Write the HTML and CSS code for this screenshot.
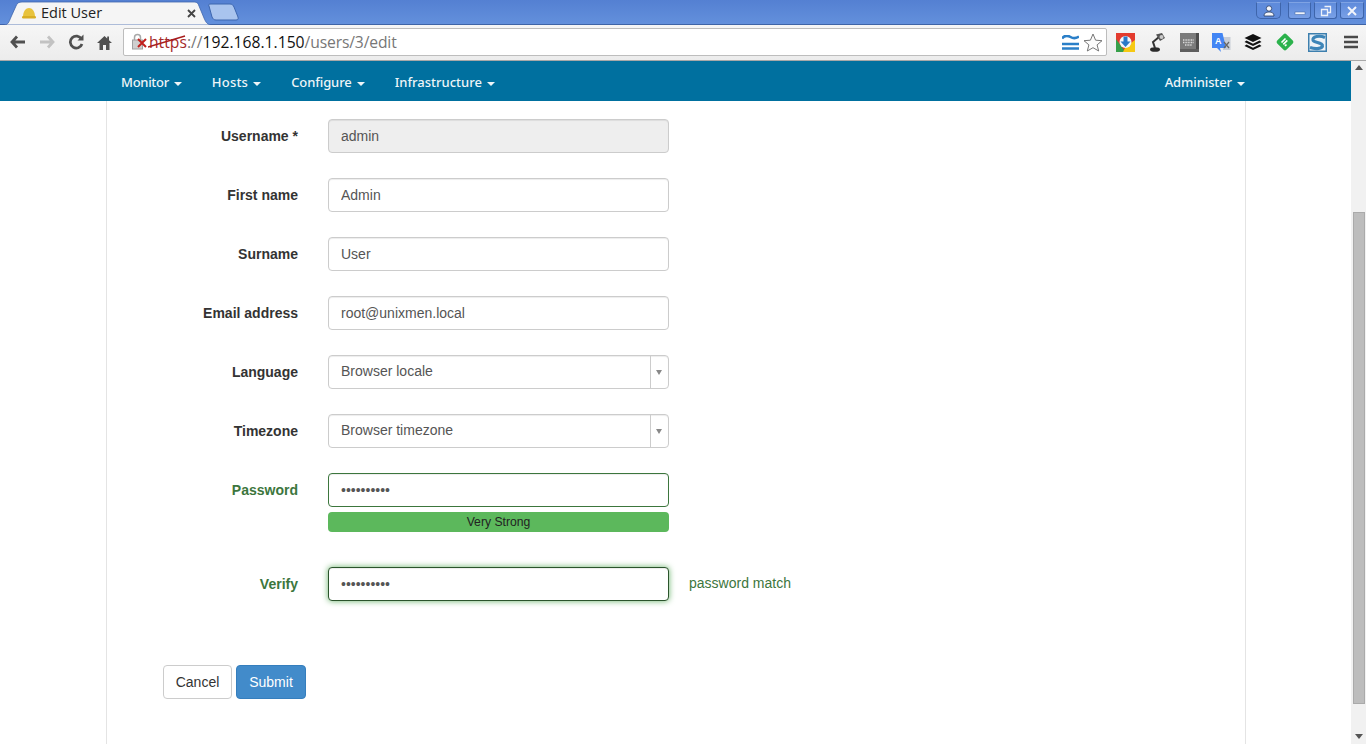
FILE: index.html
```html
<!DOCTYPE html>
<html lang="en">
<head>
<meta charset="utf-8">
<title>Edit User</title>
<link rel="stylesheet" href="styles.css">
</head>
<body>
<div class="chrome">
  <header class="tabstrip">
    <svg class="tabshape" width="240" height="25" viewBox="0 0 240 25"><path d="M0 25H4C8 25 9 22 11 17L16 6C17 3 19 2 22 2H193C197 2 198 3 199 6L204 18C206 23 208 25 212 25H0Z" fill="#f5f5f5" stroke="#3f66ad" stroke-width=".8"/><path d="M209 6C208 4.500 209 4 211 4H230C232 4 233 5 234 7L238 17C238.500 19 238 20 236 20H216C214 20 213 19 212 17Z" fill="#a9c4ee" stroke="#3d66ae"/></svg>
    <div class="tab">
      <svg class="favicon" width="14" height="12" viewBox="0 0 14 12"><path d="M1 10C1 4 4 1 7 1C10 1 13 4 13 10Z" fill="#e8c33c"/><rect y="9" width="14" height="2.500" rx="1.200" fill="#d9ae24"/></svg>
      <span class="tabtitle">Edit User</span>
      <svg class="tabclose" width="9" height="9" viewBox="0 0 9 9"><path d="M1 1L8 8M8 1L1 8" stroke="#444" stroke-width="1.800"/></svg>
    </div>
    <div class="winctl">
      <div class="winbtn userbtn"><svg width="12" height="12" viewBox="0 0 12 12"><circle cx="6" cy="3.500" r="2.700" fill="#f4f6fb" stroke="#233a66" stroke-width=".8"/><path d="M1 11C1 8 3 7 6 7C9 7 11 8 11 11Z" fill="#f4f6fb" stroke="#233a66" stroke-width=".8"/></svg></div>
      <div class="winbtn minbtn"><svg width="12" height="12" viewBox="0 0 12 12"><rect x="1" y="7" width="10" height="2.500" fill="#f2f5fb" stroke="#3a5f9e" stroke-width=".5"/></svg></div>
      <div class="winbtn maxbtn"><svg width="12" height="12" viewBox="0 0 12 12"><path d="M4.500 1.500H10.500V7.500H8M1.500 4.500H7.500V10.500H1.500Z" fill="none" stroke="#edf1f9" stroke-width="1.300"/></svg></div>
      <div class="winbtn closebtn"><svg width="12" height="12" viewBox="0 0 12 12"><path d="M2 2L10 10M10 2L2 10" stroke="#f2f5fb" stroke-width="2"/></svg></div>
    </div>
  </header>

  <div class="toolbar">
    <div class="navbtn"><svg width="16" height="14" viewBox="0 0 16 14"><path d="M7 1.500L2 7L7 12.500M2 7H15" fill="none" stroke="#505050" stroke-width="2.800"/></svg></div>
    <div class="navbtn"><svg width="16" height="14" viewBox="0 0 16 14"><path d="M9 1.500L14 7L9 12.500M14 7H1" fill="none" stroke="#c2c2c2" stroke-width="2.800"/></svg></div>
    <div class="navbtn"><svg width="16" height="16" viewBox="0 0 16 16"><path d="M13.500 5A6 6 0 1 0 14 10" fill="none" stroke="#505050" stroke-width="2.700"/><path d="M9.500 6.500H15.500V.5Z" fill="#505050"/></svg></div>
    <div class="navbtn"><svg width="15" height="15" viewBox="0 0 15 15"><path d="M7.500 1L0 8H2.500V15H6V10H9V15H12.500V8H15L12 5.200V1.500H10.200V3.500Z" fill="#505050"/></svg></div>
    <div class="omnibox">
      <svg class="lock" width="18" height="18" viewBox="0 0 18 18"><path d="M2.500 7V4.500C2.500 .5 8.500 .5 8.500 4.500V7" fill="none" stroke="#a8a8a8" stroke-width="1.500"/><rect x=".5" y="7" width="10" height="9" fill="#cfcfcf" stroke="#a0a0a0"/><path d="M6 6L14 14M14 6L6 14" stroke="#c0201c" stroke-width="2"/></svg>
      <span class="url"><span class="scheme">https<svg class="strike" width="38" height="14" viewBox="0 0 38 14"><path d="M0 13L37 2" stroke="#a81c1c" stroke-width="1.400"/></svg></span><span class="urlgray">://</span><span class="host">192.168.1.150</span><span class="urlgray">/users/3/edit</span></span>
      <svg class="wave" width="17" height="15" viewBox="0 0 17 15"><path d="M0 3.500C3-.5 6 .5 8.500 2C11 3.500 14 3.500 17 1.500M0 9H17M0 13.500H17" fill="none" stroke="#2a7fc8" stroke-width="2.600"/></svg>
      <svg class="star" width="20" height="19" viewBox="0 0 20 19"><path d="M10 1L12.600 7.200L19 7.700L14.100 11.900L15.700 18L10 14.700L4.300 18L5.900 11.900L1 7.700L7.400 7.200Z" fill="#fbfbfb" stroke="#777" stroke-width="1"/></svg>
    </div>
    <div class="extensions">
      <div class="ext"><svg width="19" height="19" viewBox="0 0 19 19"><rect width="19" height="19" fill="#e33b2e"/><path d="M0 6L9.500 19H0Z" fill="#37a04a"/><path d="M19 7V19H7L9.500 14Z" fill="#f6c913"/><circle cx="9.500" cy="9" r="6" fill="#f2f6fb"/><path d="M7.500 3.500H11.500V8.500H14.500L9.500 14L4.500 8.500H7.500Z" fill="#2878c8"/></svg></div>
      <div class="ext"><svg width="17" height="20" viewBox="0 0 17 20"><ellipse cx="6" cy="17.500" rx="5" ry="2.300" fill="#2a2a2a"/><path d="M6 16L4 10L10 5" fill="none" stroke="#333" stroke-width="2"/><path d="M7 2.500L13 1L16 6L11 9Z" fill="#555"/><circle cx="12.500" cy="5" r="2" fill="#c9c9c9"/></svg></div>
      <div class="ext"><svg width="19" height="19" viewBox="0 0 19 19"><rect width="19" height="19" fill="#7b7b7b"/><rect x="16" width="3" height="19" fill="#4d4d4d"/><rect y="16" width="19" height="3" fill="#5e5e5e"/><path d="M3 7H14M3 9.500H14M5 12H12" stroke="#dcdcdc" stroke-width="1.400" stroke-dasharray="1 .6"/></svg></div>
      <div class="ext"><svg width="19" height="19" viewBox="0 0 19 19"><path d="M9 4H18.500V17H11Z" fill="#c8cdd6"/><path d="M0 0H10.500L14 15H8L9 19L5 15H0Z" fill="#4285f4"/><text x="3" y="11" class="trans-a">A</text><path d="M12 9L17 15M17 9L12 15" stroke="#666" stroke-width="1.200"/></svg></div>
      <div class="ext"><svg width="18" height="18" viewBox="0 0 18 18"><path d="M9 1L17.500 5L9 9L.5 5Z" fill="#111"/><path d="M2.500 7.500L9 10.700L15.500 7.500L17.500 9L9 13L.5 9Z" fill="#111"/><path d="M2.500 11.500L9 14.700L15.500 11.500L17.500 13L9 17L.5 13Z" fill="#111"/></svg></div>
      <div class="ext"><svg width="20" height="20" viewBox="0 0 20 20"><rect x="3.500" y="3.500" width="13" height="13" rx="2" transform="rotate(45 10 10)" fill="#2bb24c"/><path d="M6.500 10.500L10.500 6.500M8.300 12.300L12.300 8.300M10 14L11.500 12.500" stroke="#fff" stroke-width="1.700"/></svg></div>
      <div class="ext"><svg width="19" height="19" viewBox="0 0 19 19"><rect width="19" height="19" fill="#3d7fae"/><rect x="1.500" y="1.500" width="16" height="16" fill="#eef3f7"/><path d="M17 4.500C11 2 4.500 3.500 5 7C5.500 10 14 9 14.500 12.500C15 15.500 8 16.500 2 14.500" fill="none" stroke="#3d85b8" stroke-width="3.200"/></svg></div>
      <div class="ext ext-menu"><svg width="14" height="14" viewBox="0 0 14 14"><path d="M0 2H14M0 7H14M0 12H14" stroke="#4a4a4a" stroke-width="2.600"/></svg></div>
    </div>
  </div>

  <div class="viewport">
    <div class="page">
      <nav class="topnav">
        <a class="navitem nav-monitor">Monitor<i class="caret"></i></a>
        <a class="navitem nav-hosts">Hosts<i class="caret"></i></a>
        <a class="navitem nav-config">Configure<i class="caret"></i></a>
        <a class="navitem">Infrastructure<i class="caret"></i></a>
        <a class="navitem navright">Administer<i class="caret"></i></a>
      </nav>
      <main class="container">
        <form class="userform">
          <div class="row"><label class="lbl">Username *</label><input class="ctl" type="text" value="admin" disabled></div>
          <div class="row"><label class="lbl">First name</label><input class="ctl" type="text" value="Admin"></div>
          <div class="row"><label class="lbl">Surname</label><input class="ctl" type="text" value="User"></div>
          <div class="row"><label class="lbl">Email address</label><input class="ctl" type="text" value="root@unixmen.local"></div>
          <div class="row"><label class="lbl">Language</label><div class="ctl select"><span class="seltext">Browser locale</span><span class="selarrow"></span></div></div>
          <div class="row"><label class="lbl">Timezone</label><div class="ctl select"><span class="seltext">Browser timezone</span><span class="selarrow"></span></div></div>
          <div class="row row-pass">
            <label class="lbl ok">Password</label>
            <div class="stack">
              <input class="ctl ctl-ok" type="password" value="••••••••••">
              <div class="strength">Very Strong</div>
            </div>
          </div>
          <div class="row row-verify">
            <label class="lbl ok">Verify</label>
            <input class="ctl ctl-focus" type="password" value="••••••••••">
            <span class="match">password match</span>
          </div>
          <div class="actions">
            <button class="btn" type="button">Cancel</button>
            <button class="btn btn-primary" type="button">Submit</button>
          </div>
        </form>
      </main>
    </div>
    <div class="scrollbar">
      <span class="sb-up"></span>
      <div class="sb-thumb"></div>
      <span class="sb-down"></span>
    </div>
  </div>
</div>
</body>
</html>
```
FILE: styles.css
```css
* { box-sizing: border-box; }
html, body { margin: 0; height: 100%; overflow: hidden; }
body { font-family: "Liberation Sans", Arial, sans-serif; font-size: 14px; color: #333; background: #fff; }
.chrome { display: flex; flex-direction: column; height: 744px; }

.tabstrip { position: relative; flex: 0 0 25px; background: linear-gradient(#5480d2, #6390dc); display: flex; align-items: flex-start; justify-content: space-between; border-bottom: 1px solid #3f64a6; }
.tabshape { position: absolute; left: 0; top: 0; }
.tab { position: relative; margin-left: 22px; width: 174px; height: 24px; display: flex; align-items: center; font-family: "Open Sans", sans-serif; font-size: 14.500px; color: #222; }
.favicon { flex: none; margin-top: 2px; }
.tabtitle { margin-left: 5px; flex: 1; padding-top: 1px; }
.tabclose { flex: none; margin-top: 2px; }
.winctl { position: relative; display: flex; margin-right: 2px; height: 20px; }
.winbtn { width: 23px; height: 17px; margin-top: 2px; margin-left: 3px; display: flex; align-items: center; justify-content: center; border: 1px solid #3e65ab; border-top-color: #7fa3e4; border-radius: 0 0 3px 3px; background: linear-gradient(#5f8bdb, #79a0e6); }
.userbtn { width: 25px; margin-right: 4px; margin-left: 0; border-radius: 0 0 5px 5px; background: #5f8bdb; }
.minbtn { width: 23px; }
.closebtn { width: 24px; }

.toolbar { flex: 0 0 36px; display: flex; align-items: flex-start; padding: 3px 0 0 3px; background: linear-gradient(#f6f6f6, #ececec); border-bottom: 1px solid #a8a8a8; }
.navbtn { flex: 0 0 29px; height: 28px; display: flex; align-items: center; justify-content: center; }
.omnibox { position: relative; flex: 0 0 984px; height: 28px; margin: 0 2px 0 4px; padding-left: 8px; display: flex; align-items: center; background: #fff; border: 1px solid #bdbdbd; border-radius: 2px; }
.lock { flex: none; }
.url { flex: 1; margin-left: -2px; font-family: "Open Sans", sans-serif; font-size: 15.700px; white-space: nowrap; padding-left: 1px; }
.scheme { position: relative; color: #a52a2a; }
.strike { position: absolute; left: -1px; top: 3px; }
.urlgray { color: #777; }
.host { color: #111; }
.host + .urlgray { letter-spacing: -.15px; }
.wave { flex: none; margin-right: 4px; }
.star { flex: none; margin-right: 3px; }
.extensions { display: flex; }
.ext { flex: 0 0 32px; height: 28px; display: flex; align-items: center; justify-content: center; }
.ext-menu { margin-left: 2px; }
.trans-a { font-family: "Liberation Sans", sans-serif; font-size: 9px; font-weight: 700; fill: #fff; }

.viewport { flex: 1; display: flex; min-height: 0; }
.page { flex: 1; min-width: 0; display: flex; flex-direction: column; }
.topnav { flex: 0 0 40px; display: flex; align-items: center; gap: 30px; padding: 2px 106px 0 121px; background: #00709f; }
.navitem { font-family: "Noto Sans", sans-serif; font-size: 13px; font-weight: 500; color: #eef5f8; white-space: nowrap; }
.nav-monitor { letter-spacing: -.3px; }
.nav-hosts { letter-spacing: .2px; }
.nav-config { letter-spacing: -.1px; }
.navright { margin-left: auto; letter-spacing: -.1px; }
.caret { display: inline-block; width: 0; height: 0; margin-left: 5px; vertical-align: middle; border-top: 4px solid #eef5f8; border-left: 4px solid transparent; border-right: 4px solid transparent; }

.container { flex: 1; width: 1140px; margin-left: 106px; border-left: 1px solid #e4e4e4; border-right: 1px solid #e4e4e4; padding-top: 18px; }
.userform { display: flex; flex-direction: column; }
.row { display: flex; align-items: center; margin-bottom: 25px; }
.row-pass { align-items: flex-start; margin-bottom: 35px; }
.row-pass .lbl { line-height: 34px; }
.row-verify { margin-bottom: 64px; }
.lbl { flex: 0 0 191px; margin-right: 30px; text-align: right; font-weight: 700; color: #333; }
.lbl.ok { color: #3c763d; }
.ctl { flex: 0 0 341px; width: 341px; height: 34px; padding: 6px 12px; font-family: "Liberation Sans", Arial, sans-serif; font-size: 14px; color: #555; background: #fff; border: 1px solid #ccc; border-radius: 4px; outline: none; box-shadow: inset 0 1px 1px rgba(0,0,0,.075); }
.ctl:disabled { background: #eee; color: #555; opacity: 1; }
.ctl-ok { display: block; flex: 0 0 34px; border-color: #3c763d; }
.ctl-focus { border-color: #2b542c; box-shadow: inset 0 1px 1px rgba(0,0,0,.075), 0 0 6px #67b168; }
.select { position: relative; display: flex; align-items: center; padding: 0 0 2px 12px; }
.seltext { flex: 1; }
.selarrow { position: absolute; right: 0; top: 0; bottom: 0; width: 18px; border-left: 1px solid #ccc; }
.selarrow::after { content: ""; position: absolute; left: 5px; top: 14px; border-top: 5px solid #888; border-left: 3.500px solid transparent; border-right: 3.500px solid transparent; }
.stack { flex: 0 0 341px; display: flex; flex-direction: column; gap: 5px; }
.strength { height: 20px; line-height: 20px; text-align: center; font-size: 12.200px; color: #222; background: #5cb85c; border-radius: 4px; }
.match { margin-left: 20px; margin-top: -2px; color: #3c763d; }
.actions { display: flex; gap: 4px; padding-left: 56px; }
.btn { width: 69px; height: 34px; padding: 0; font-family: "Liberation Sans", Arial, sans-serif; font-size: 14px; color: #333; background: #fff; border: 1px solid #ccc; border-radius: 4px; }
.btn-primary { width: 70px; color: #fff; background: #428bca; border-color: #357ebd; }

.scrollbar { position: relative; flex: 0 0 15px; background: #f1f1f1; display: flex; flex-direction: column; align-items: center; justify-content: space-between; padding: 4px 0 5px; }
.sb-thumb { position: absolute; left: 2px; right: 1px; top: 151px; height: 492px; background: #bdbdbd; border: 1px solid #aaa; }
.sb-up { border-bottom: 5px solid #555; border-left: 4px solid transparent; border-right: 4px solid transparent; }
.sb-down { border-top: 5px solid #555; border-left: 4px solid transparent; border-right: 4px solid transparent; }
```
